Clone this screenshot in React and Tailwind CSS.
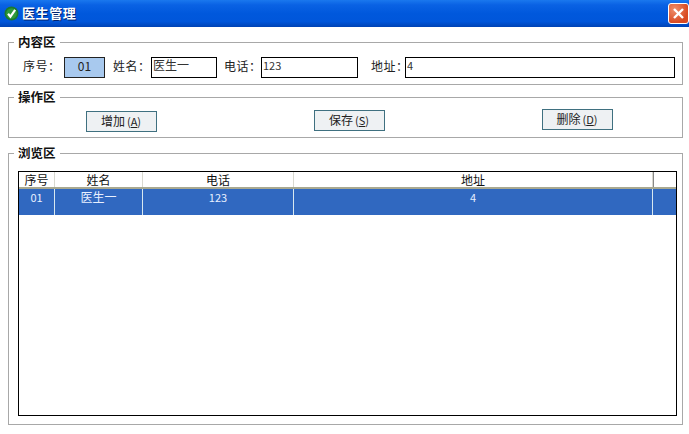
const font = "font-['SimSun','Noto_Sans_CJK_SC','Liberation_Sans',sans-serif]";

function Group({ title, className, children }) {
  return (
    <fieldset className={`border border-[#a8a8a8] w-[675px] ${className}`}>
      <legend className="ml-[5px] px-[4px] h-[14px] text-[12.5px] leading-[14px] font-bold text-[#111]">{title}</legend>
      {children}
    </fieldset>
  );
}

function Label({ children, className }) {
  return <span className={`whitespace-nowrap pb-[3px] text-[12px] leading-[14px] text-[#222] tracking-[0.5px] ${className}`}>{children}</span>;
}

function Field({ value, className }) {
  return (
    <div className={`h-[21px] border border-black bg-white pl-[1px] text-[11px] leading-[14px] text-[#333] ${className}`}>{value}</div>
  );
}

function Btn({ label, hot, className }) {
  return (
    <button className={`w-[71px] h-[21px] border border-[#3f7080] bg-[#eef1f3] pb-[2px] pr-[1px] text-[12px] leading-[14px] text-[#222] flex items-center justify-center ${className}`}>
      {label} <span className="ml-[2px] text-[11px]">(<span className="underline">{hot}</span>)</span>
    </button>
  );
}

const cols = [
  { w: "w-[36px]", h: "序号", v: "01", t: "text-[11px]" },
  { w: "w-[88px]", h: "姓名", v: "医生一", t: "text-[12px]" },
  { w: "w-[151px]", h: "电话", v: "123", t: "text-[11px]" },
  { w: "w-[359px]", h: "地址", v: "4", t: "text-[11px]" },
];

export default function App() {
  return (
    <div className={`w-[689px] h-[434px] bg-white overflow-hidden flex flex-col ${font}`}>
      <div className="h-[27px] shrink-0 bg-[linear-gradient(to_bottom,#1a78ee_0%,#0a62e4_18%,#0058dc_50%,#0056da_80%,#0043b4_100%)] flex items-center pl-[4px] pb-[1px] relative">
        <svg width="15" height="15" viewBox="0 0 14 14" className="mr-[3px]">
          <circle cx="7" cy="7" r="6.5" fill="#1c7a2c" />
          <circle cx="7" cy="7" r="5" fill="#2f9a3c" />
          <path d="M3.8 7.2 L6 10 L10.4 3.6" stroke="#fff" strokeWidth="2" fill="none" />
        </svg>
        <span className="text-[13px] leading-[14px] font-bold tracking-[0.6px] text-white [text-shadow:1px_1px_0_#00226e]">医生管理</span>
        <div className="absolute right-0 top-[3px] w-[21px] h-[21px] rounded-[3px] border border-white bg-[radial-gradient(circle_at_30%_30%,#ee8f6c,#d94a22_70%)] flex items-center justify-center">
          <svg width="13" height="13" viewBox="0 0 13 13">
            <path d="M2 2 L11 11 M11 2 L2 11" stroke="#fff" strokeWidth="2.4" />
          </svg>
        </div>
      </div>

      <div className="pl-[8px] flex flex-col">
        <Group title="内容区" className="mt-[8px] h-[50px]">
          <div className="flex items-center pt-[8px] pl-[14px]">
            <Label className="w-[41px]">序号：</Label>
            <div className="w-[41px] h-[21px] border border-[#222] bg-[#a8c9ee] text-[12px] leading-[16px] text-center text-[#222]">01</div>
            <Label className="ml-[8px] w-[38px]">姓名：</Label>
            <Field value="医生一" className="w-[66px] text-[12px]" />
            <Label className="ml-[7px] w-[37px]">电话：</Label>
            <Field value="123" className="w-[97px]" />
            <Label className="ml-[13px] w-[34px]">地址：</Label>
            <Field value="4" className="w-[270px]" />
          </div>
        </Group>

        <Group title="操作区" className="mt-[5px] h-[48px]">
          <div className="relative flex pt-[7px] pl-[77px]">
            <Btn label="增加" hot="A" className="mt-[0px]" />
            <Btn label="保存" hot="S" className="ml-[157px] -mt-[1px]" />
            <Btn label="删除" hot="D" className="ml-[157px] -mt-[2px]" />
          </div>
        </Group>

        <Group title="浏览区" className="mt-[8px] h-[279px]">
          <div className="mt-[11px] ml-[9px] w-[659px] h-[245px] border border-black bg-white">
            <div className="flex h-[17px] border-b-2 border-[#a8a890]">
              {cols.map((c) => (
                <div key={c.h} className={`${c.w} border-r border-[#d8d8d0] text-center text-[12px] leading-[15px] text-[#111]`}>{c.h}</div>
              ))}
              <div className="flex-1 border-l border-[#888]" />
            </div>
            <div className="flex h-[26px] bg-[#3068c0]">
              {cols.map((c) => (
                <div key={c.h} className={`${c.w} ${c.t} border-r border-[#d8e8f0] text-center leading-[16px] text-[#e8f0ff]`}>{c.v}</div>
              ))}
            </div>
          </div>
        </Group>
      </div>
    </div>
  );
}
